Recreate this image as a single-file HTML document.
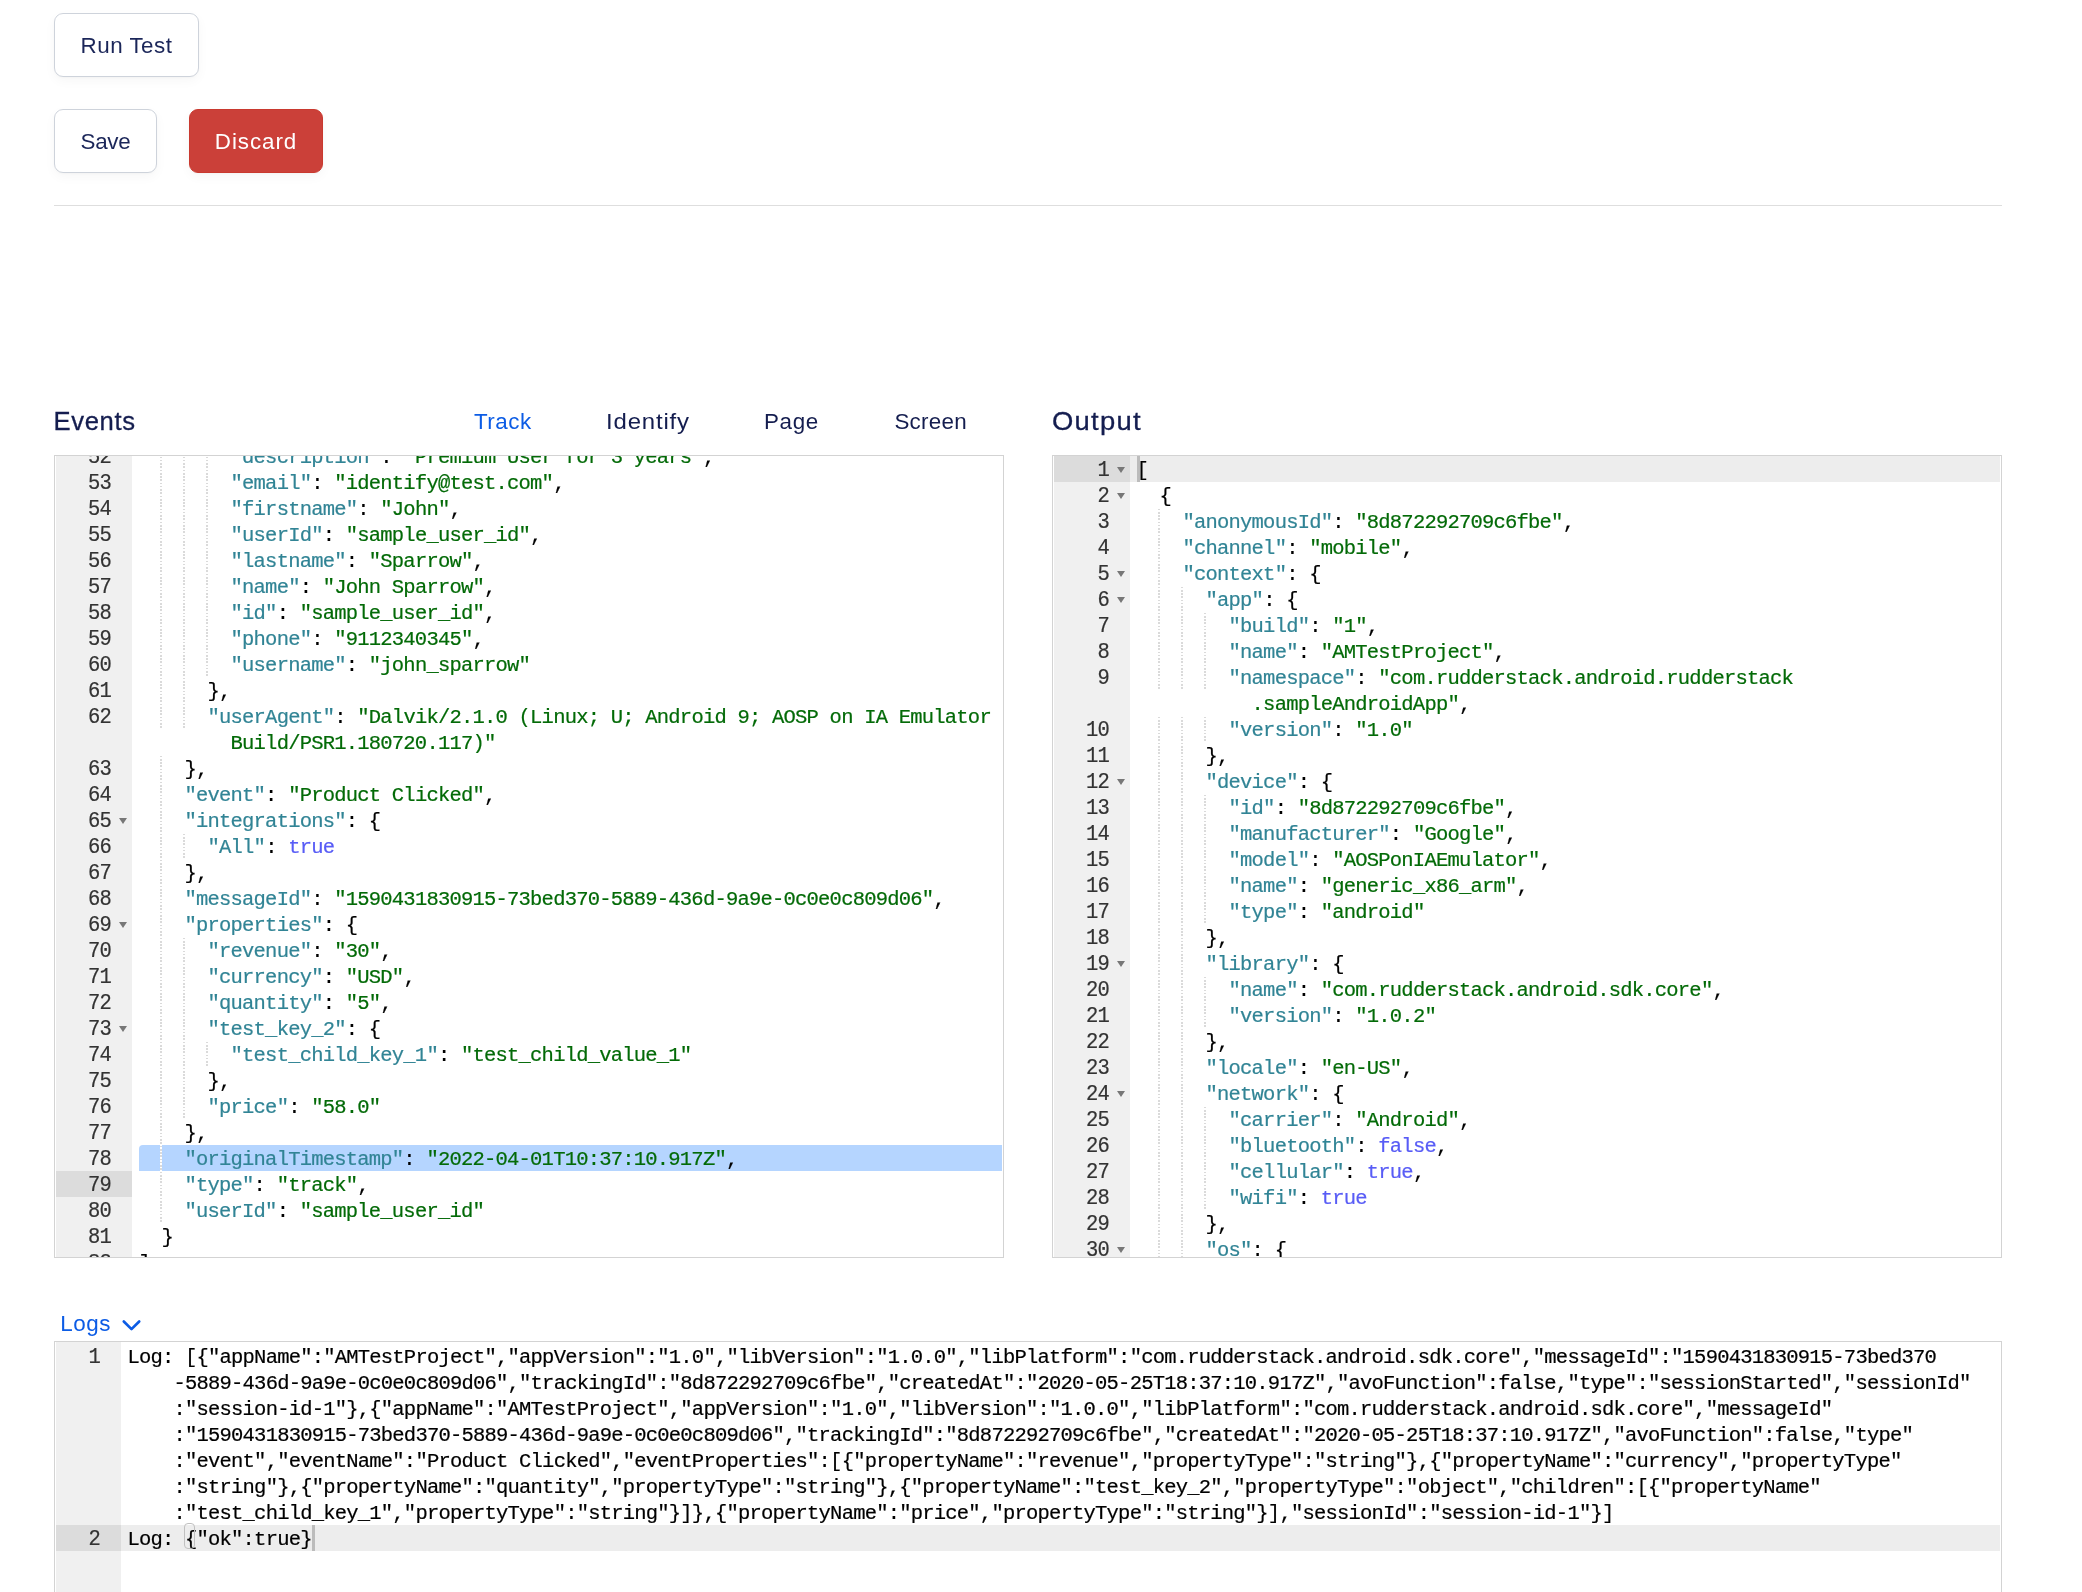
<!DOCTYPE html>
<html><head><meta charset="utf-8"><title>Transformation</title>
<style>
html,body{margin:0;padding:0}
body{width:2082px;height:1592px;overflow:hidden;background:#fff;position:relative;will-change:transform;font-family:"Liberation Sans",sans-serif;color:#141d4f}
.btn{position:absolute;box-sizing:border-box;height:64px;border:1px solid #ced3db;border-radius:9px;background:#fff;font-size:22.4px;line-height:64px;text-align:center;color:#1b2659;box-shadow:0 4px 12px rgba(20,25,40,.035),0 1px 3px rgba(20,25,40,.03);white-space:nowrap}
.btn.red{background:#cb4039;border-color:#c9392f;color:#fff}
.hr{position:absolute;left:54px;top:205px;width:1948px;height:1px;background:#dedede}
.h{position:absolute;font-size:25.6px;line-height:32px;white-space:nowrap;color:#141d4f;-webkit-text-stroke:.3px #141d4f;transform-origin:0 0}
.tab{position:absolute;transform-origin:0 0;font-size:22.4px;line-height:30px;white-space:nowrap;color:#141d4f}
.ed{position:absolute;box-sizing:border-box;border:1px solid #d3d3d3;background:#fff;overflow:hidden;font-family:"Liberation Mono",monospace;font-size:20.5px;letter-spacing:-0.7820px;line-height:26px;color:#000;-webkit-text-stroke:.2px}
.ed>*{position:absolute}
.gut{top:0;bottom:0;background:#f0f0f0}
.ga{background:#dcdcdc}
.la{background:#ededed}
.sel{background:#b5d5ff;border-radius:4px 0 0 0}
.gn{height:26px;text-align:right;color:#333;white-space:pre;padding-top:2px;transform:scaleY(1.1);transform-origin:0 20px}
.tx{height:26px;white-space:pre;padding-top:2px}
.k{color:#318495}.s{color:#036a07}.b{color:#585cf6}
.fa{width:0;height:0;border-left:4.2px solid transparent;border-right:4.2px solid transparent;border-top:6px solid #777}
.ig{width:2px;height:26px;background:repeating-linear-gradient(to bottom,#fff 0,#fff .8px,#dadada .8px,#dadada 2.4px,#fff 2.4px,#fff 3.2px)}
.cur{width:3px;height:26px;background:#bcbcbc}
.br{box-sizing:border-box;width:11px;height:26px;border:1px solid #c0c0c0;border-radius:4px}
</style></head><body>
<div class="btn" style="left:54px;top:13px;width:145px;letter-spacing:.49px">Run Test</div>
<div class="btn" style="left:54px;top:109px;width:103px;letter-spacing:-.3px">Save</div>
<div class="btn red" style="left:189px;top:109px;width:134px;letter-spacing:.93px">Discard</div>
<div class="hr"></div>
<div class="h" id="hEvents" style="left:53.5px;top:405px;letter-spacing:.64px">Events</div>
<div class="tab" id="tTrack" style="left:474px;top:407px;letter-spacing:.5px;color:#0c5ce5">Track</div>
<div class="tab" id="tIdentify" style="left:606.2px;top:407px;letter-spacing:.77px;transform:scaleX(1.07)">Identify</div>
<div class="tab" id="tPage" style="left:764px;top:407px;letter-spacing:.63px">Page</div>
<div class="tab" id="tScreen" style="left:894.4px;top:407px;letter-spacing:.26px">Screen</div>
<div class="h" id="hOutput" style="left:1052px;top:405px;letter-spacing:1.2px;transform:scaleX(1.07)">Output</div>
<div class="ed" style="left:54px;top:455px;width:950px;height:803px">
<div class="gut" style="left:1px;width:76px"></div>
<div class="gn" style="left:1px;top:-13px;width:55px">52</div>
<i class="ig" style="left:105.2px;top:-13px"></i>
<i class="ig" style="left:128.3px;top:-13px"></i>
<i class="ig" style="left:151.3px;top:-13px"></i>
<div class="tx" style="left:175.56px;top:-13px"><span class="k">"description"</span>: <span class="s">"Premium User for 3 years"</span>,</div>
<div class="gn" style="left:1px;top:13px;width:55px">53</div>
<i class="ig" style="left:105.2px;top:13px"></i>
<i class="ig" style="left:128.3px;top:13px"></i>
<i class="ig" style="left:151.3px;top:13px"></i>
<div class="tx" style="left:175.56px;top:13px"><span class="k">"email"</span>: <span class="s">"identify@test.com"</span>,</div>
<div class="gn" style="left:1px;top:39px;width:55px">54</div>
<i class="ig" style="left:105.2px;top:39px"></i>
<i class="ig" style="left:128.3px;top:39px"></i>
<i class="ig" style="left:151.3px;top:39px"></i>
<div class="tx" style="left:175.56px;top:39px"><span class="k">"firstname"</span>: <span class="s">"John"</span>,</div>
<div class="gn" style="left:1px;top:65px;width:55px">55</div>
<i class="ig" style="left:105.2px;top:65px"></i>
<i class="ig" style="left:128.3px;top:65px"></i>
<i class="ig" style="left:151.3px;top:65px"></i>
<div class="tx" style="left:175.56px;top:65px"><span class="k">"userId"</span>: <span class="s">"sample_user_id"</span>,</div>
<div class="gn" style="left:1px;top:91px;width:55px">56</div>
<i class="ig" style="left:105.2px;top:91px"></i>
<i class="ig" style="left:128.3px;top:91px"></i>
<i class="ig" style="left:151.3px;top:91px"></i>
<div class="tx" style="left:175.56px;top:91px"><span class="k">"lastname"</span>: <span class="s">"Sparrow"</span>,</div>
<div class="gn" style="left:1px;top:117px;width:55px">57</div>
<i class="ig" style="left:105.2px;top:117px"></i>
<i class="ig" style="left:128.3px;top:117px"></i>
<i class="ig" style="left:151.3px;top:117px"></i>
<div class="tx" style="left:175.56px;top:117px"><span class="k">"name"</span>: <span class="s">"John Sparrow"</span>,</div>
<div class="gn" style="left:1px;top:143px;width:55px">58</div>
<i class="ig" style="left:105.2px;top:143px"></i>
<i class="ig" style="left:128.3px;top:143px"></i>
<i class="ig" style="left:151.3px;top:143px"></i>
<div class="tx" style="left:175.56px;top:143px"><span class="k">"id"</span>: <span class="s">"sample_user_id"</span>,</div>
<div class="gn" style="left:1px;top:169px;width:55px">59</div>
<i class="ig" style="left:105.2px;top:169px"></i>
<i class="ig" style="left:128.3px;top:169px"></i>
<i class="ig" style="left:151.3px;top:169px"></i>
<div class="tx" style="left:175.56px;top:169px"><span class="k">"phone"</span>: <span class="s">"9112340345"</span>,</div>
<div class="gn" style="left:1px;top:195px;width:55px">60</div>
<i class="ig" style="left:105.2px;top:195px"></i>
<i class="ig" style="left:128.3px;top:195px"></i>
<i class="ig" style="left:151.3px;top:195px"></i>
<div class="tx" style="left:175.56px;top:195px"><span class="k">"username"</span>: <span class="s">"john_sparrow"</span></div>
<div class="gn" style="left:1px;top:221px;width:55px">61</div>
<i class="ig" style="left:105.2px;top:221px"></i>
<i class="ig" style="left:128.3px;top:221px"></i>
<div class="tx" style="left:152.52px;top:221px">},</div>
<div class="gn" style="left:1px;top:247px;width:55px">62</div>
<i class="ig" style="left:105.2px;top:247px"></i>
<i class="ig" style="left:128.3px;top:247px"></i>
<div class="tx" style="left:152.52px;top:247px"><span class="k">"userAgent"</span>: <span class="s">"Dalvik/2.1.0 (Linux; U; Android 9; AOSP on IA Emulator</span></div>
<div class="tx" style="left:175.56px;top:273px"><span class="s">Build/PSR1.180720.117)"</span></div>
<div class="gn" style="left:1px;top:299px;width:55px">63</div>
<i class="ig" style="left:105.2px;top:299px"></i>
<div class="tx" style="left:129.48px;top:299px">},</div>
<div class="gn" style="left:1px;top:325px;width:55px">64</div>
<i class="ig" style="left:105.2px;top:325px"></i>
<div class="tx" style="left:129.48px;top:325px"><span class="k">"event"</span>: <span class="s">"Product Clicked"</span>,</div>
<div class="gn" style="left:1px;top:351px;width:55px">65</div>
<i class="fa" style="left:64.0px;top:362px"></i>
<i class="ig" style="left:105.2px;top:351px"></i>
<div class="tx" style="left:129.48px;top:351px"><span class="k">"integrations"</span>: {</div>
<div class="gn" style="left:1px;top:377px;width:55px">66</div>
<i class="ig" style="left:105.2px;top:377px"></i>
<i class="ig" style="left:128.3px;top:377px"></i>
<div class="tx" style="left:152.52px;top:377px"><span class="k">"All"</span>: <span class="b">true</span></div>
<div class="gn" style="left:1px;top:403px;width:55px">67</div>
<i class="ig" style="left:105.2px;top:403px"></i>
<div class="tx" style="left:129.48px;top:403px">},</div>
<div class="gn" style="left:1px;top:429px;width:55px">68</div>
<i class="ig" style="left:105.2px;top:429px"></i>
<div class="tx" style="left:129.48px;top:429px"><span class="k">"messageId"</span>: <span class="s">"1590431830915-73bed370-5889-436d-9a9e-0c0e0c809d06"</span>,</div>
<div class="gn" style="left:1px;top:455px;width:55px">69</div>
<i class="fa" style="left:64.0px;top:466px"></i>
<i class="ig" style="left:105.2px;top:455px"></i>
<div class="tx" style="left:129.48px;top:455px"><span class="k">"properties"</span>: {</div>
<div class="gn" style="left:1px;top:481px;width:55px">70</div>
<i class="ig" style="left:105.2px;top:481px"></i>
<i class="ig" style="left:128.3px;top:481px"></i>
<div class="tx" style="left:152.52px;top:481px"><span class="k">"revenue"</span>: <span class="s">"30"</span>,</div>
<div class="gn" style="left:1px;top:507px;width:55px">71</div>
<i class="ig" style="left:105.2px;top:507px"></i>
<i class="ig" style="left:128.3px;top:507px"></i>
<div class="tx" style="left:152.52px;top:507px"><span class="k">"currency"</span>: <span class="s">"USD"</span>,</div>
<div class="gn" style="left:1px;top:533px;width:55px">72</div>
<i class="ig" style="left:105.2px;top:533px"></i>
<i class="ig" style="left:128.3px;top:533px"></i>
<div class="tx" style="left:152.52px;top:533px"><span class="k">"quantity"</span>: <span class="s">"5"</span>,</div>
<div class="gn" style="left:1px;top:559px;width:55px">73</div>
<i class="fa" style="left:64.0px;top:570px"></i>
<i class="ig" style="left:105.2px;top:559px"></i>
<i class="ig" style="left:128.3px;top:559px"></i>
<div class="tx" style="left:152.52px;top:559px"><span class="k">"test_key_2"</span>: {</div>
<div class="gn" style="left:1px;top:585px;width:55px">74</div>
<i class="ig" style="left:105.2px;top:585px"></i>
<i class="ig" style="left:128.3px;top:585px"></i>
<i class="ig" style="left:151.3px;top:585px"></i>
<div class="tx" style="left:175.56px;top:585px"><span class="k">"test_child_key_1"</span>: <span class="s">"test_child_value_1"</span></div>
<div class="gn" style="left:1px;top:611px;width:55px">75</div>
<i class="ig" style="left:105.2px;top:611px"></i>
<i class="ig" style="left:128.3px;top:611px"></i>
<div class="tx" style="left:152.52px;top:611px">},</div>
<div class="gn" style="left:1px;top:637px;width:55px">76</div>
<i class="ig" style="left:105.2px;top:637px"></i>
<i class="ig" style="left:128.3px;top:637px"></i>
<div class="tx" style="left:152.52px;top:637px"><span class="k">"price"</span>: <span class="s">"58.0"</span></div>
<div class="gn" style="left:1px;top:663px;width:55px">77</div>
<i class="ig" style="left:105.2px;top:663px"></i>
<div class="tx" style="left:129.48px;top:663px">},</div>
<div class="sel" style="left:84.4px;top:689px;width:862.6px;height:26px"></div>
<div class="gn" style="left:1px;top:689px;width:55px">78</div>
<i class="ig" style="left:105.2px;top:689px"></i>
<div class="tx" style="left:129.48px;top:689px"><span class="k">"originalTimestamp"</span>: <span class="s">"2022-04-01T10:37:10.917Z"</span>,</div>
<div class="ga" style="left:1px;top:715px;width:76px;height:26px"></div>
<div class="gn" style="left:1px;top:715px;width:55px">79</div>
<i class="ig" style="left:105.2px;top:715px"></i>
<div class="tx" style="left:129.48px;top:715px"><span class="k">"type"</span>: <span class="s">"track"</span>,</div>
<div class="gn" style="left:1px;top:741px;width:55px">80</div>
<i class="ig" style="left:105.2px;top:741px"></i>
<div class="tx" style="left:129.48px;top:741px"><span class="k">"userId"</span>: <span class="s">"sample_user_id"</span></div>
<div class="gn" style="left:1px;top:767px;width:55px">81</div>
<div class="tx" style="left:106.44px;top:767px">}</div>
<div class="gn" style="left:1px;top:793px;width:55px">82</div>
<div class="tx" style="left:83.40px;top:793px">]</div>
</div>
<div class="ed" style="left:1052px;top:455px;width:950px;height:803px">
<div class="gut" style="left:1px;width:76px"></div>
<div class="ga" style="left:1px;top:0px;width:76px;height:26px"></div>
<div class="la" style="left:77px;top:0px;width:870px;height:26px"></div>
<div class="gn" style="left:1px;top:0px;width:55px">1</div>
<i class="fa" style="left:64.0px;top:11px"></i>
<div class="tx" style="left:83.40px;top:0px">[</div>
<div class="cur" style="left:calc(83.4px + 1px);top:0px"></div>
<div class="gn" style="left:1px;top:26px;width:55px">2</div>
<i class="fa" style="left:64.0px;top:37px"></i>
<div class="tx" style="left:106.44px;top:26px">{</div>
<div class="gn" style="left:1px;top:52px;width:55px">3</div>
<i class="ig" style="left:105.2px;top:52px"></i>
<div class="tx" style="left:129.48px;top:52px"><span class="k">"anonymousId"</span>: <span class="s">"8d872292709c6fbe"</span>,</div>
<div class="gn" style="left:1px;top:78px;width:55px">4</div>
<i class="ig" style="left:105.2px;top:78px"></i>
<div class="tx" style="left:129.48px;top:78px"><span class="k">"channel"</span>: <span class="s">"mobile"</span>,</div>
<div class="gn" style="left:1px;top:104px;width:55px">5</div>
<i class="fa" style="left:64.0px;top:115px"></i>
<i class="ig" style="left:105.2px;top:104px"></i>
<div class="tx" style="left:129.48px;top:104px"><span class="k">"context"</span>: {</div>
<div class="gn" style="left:1px;top:130px;width:55px">6</div>
<i class="fa" style="left:64.0px;top:141px"></i>
<i class="ig" style="left:105.2px;top:130px"></i>
<i class="ig" style="left:128.3px;top:130px"></i>
<div class="tx" style="left:152.52px;top:130px"><span class="k">"app"</span>: {</div>
<div class="gn" style="left:1px;top:156px;width:55px">7</div>
<i class="ig" style="left:105.2px;top:156px"></i>
<i class="ig" style="left:128.3px;top:156px"></i>
<i class="ig" style="left:151.3px;top:156px"></i>
<div class="tx" style="left:175.56px;top:156px"><span class="k">"build"</span>: <span class="s">"1"</span>,</div>
<div class="gn" style="left:1px;top:182px;width:55px">8</div>
<i class="ig" style="left:105.2px;top:182px"></i>
<i class="ig" style="left:128.3px;top:182px"></i>
<i class="ig" style="left:151.3px;top:182px"></i>
<div class="tx" style="left:175.56px;top:182px"><span class="k">"name"</span>: <span class="s">"AMTestProject"</span>,</div>
<div class="gn" style="left:1px;top:208px;width:55px">9</div>
<i class="ig" style="left:105.2px;top:208px"></i>
<i class="ig" style="left:128.3px;top:208px"></i>
<i class="ig" style="left:151.3px;top:208px"></i>
<div class="tx" style="left:175.56px;top:208px"><span class="k">"namespace"</span>: <span class="s">"com.rudderstack.android.rudderstack</span></div>
<div class="tx" style="left:198.60px;top:234px"><span class="s">.sampleAndroidApp"</span>,</div>
<div class="gn" style="left:1px;top:260px;width:55px">10</div>
<i class="ig" style="left:105.2px;top:260px"></i>
<i class="ig" style="left:128.3px;top:260px"></i>
<i class="ig" style="left:151.3px;top:260px"></i>
<div class="tx" style="left:175.56px;top:260px"><span class="k">"version"</span>: <span class="s">"1.0"</span></div>
<div class="gn" style="left:1px;top:286px;width:55px">11</div>
<i class="ig" style="left:105.2px;top:286px"></i>
<i class="ig" style="left:128.3px;top:286px"></i>
<div class="tx" style="left:152.52px;top:286px">},</div>
<div class="gn" style="left:1px;top:312px;width:55px">12</div>
<i class="fa" style="left:64.0px;top:323px"></i>
<i class="ig" style="left:105.2px;top:312px"></i>
<i class="ig" style="left:128.3px;top:312px"></i>
<div class="tx" style="left:152.52px;top:312px"><span class="k">"device"</span>: {</div>
<div class="gn" style="left:1px;top:338px;width:55px">13</div>
<i class="ig" style="left:105.2px;top:338px"></i>
<i class="ig" style="left:128.3px;top:338px"></i>
<i class="ig" style="left:151.3px;top:338px"></i>
<div class="tx" style="left:175.56px;top:338px"><span class="k">"id"</span>: <span class="s">"8d872292709c6fbe"</span>,</div>
<div class="gn" style="left:1px;top:364px;width:55px">14</div>
<i class="ig" style="left:105.2px;top:364px"></i>
<i class="ig" style="left:128.3px;top:364px"></i>
<i class="ig" style="left:151.3px;top:364px"></i>
<div class="tx" style="left:175.56px;top:364px"><span class="k">"manufacturer"</span>: <span class="s">"Google"</span>,</div>
<div class="gn" style="left:1px;top:390px;width:55px">15</div>
<i class="ig" style="left:105.2px;top:390px"></i>
<i class="ig" style="left:128.3px;top:390px"></i>
<i class="ig" style="left:151.3px;top:390px"></i>
<div class="tx" style="left:175.56px;top:390px"><span class="k">"model"</span>: <span class="s">"AOSPonIAEmulator"</span>,</div>
<div class="gn" style="left:1px;top:416px;width:55px">16</div>
<i class="ig" style="left:105.2px;top:416px"></i>
<i class="ig" style="left:128.3px;top:416px"></i>
<i class="ig" style="left:151.3px;top:416px"></i>
<div class="tx" style="left:175.56px;top:416px"><span class="k">"name"</span>: <span class="s">"generic_x86_arm"</span>,</div>
<div class="gn" style="left:1px;top:442px;width:55px">17</div>
<i class="ig" style="left:105.2px;top:442px"></i>
<i class="ig" style="left:128.3px;top:442px"></i>
<i class="ig" style="left:151.3px;top:442px"></i>
<div class="tx" style="left:175.56px;top:442px"><span class="k">"type"</span>: <span class="s">"android"</span></div>
<div class="gn" style="left:1px;top:468px;width:55px">18</div>
<i class="ig" style="left:105.2px;top:468px"></i>
<i class="ig" style="left:128.3px;top:468px"></i>
<div class="tx" style="left:152.52px;top:468px">},</div>
<div class="gn" style="left:1px;top:494px;width:55px">19</div>
<i class="fa" style="left:64.0px;top:505px"></i>
<i class="ig" style="left:105.2px;top:494px"></i>
<i class="ig" style="left:128.3px;top:494px"></i>
<div class="tx" style="left:152.52px;top:494px"><span class="k">"library"</span>: {</div>
<div class="gn" style="left:1px;top:520px;width:55px">20</div>
<i class="ig" style="left:105.2px;top:520px"></i>
<i class="ig" style="left:128.3px;top:520px"></i>
<i class="ig" style="left:151.3px;top:520px"></i>
<div class="tx" style="left:175.56px;top:520px"><span class="k">"name"</span>: <span class="s">"com.rudderstack.android.sdk.core"</span>,</div>
<div class="gn" style="left:1px;top:546px;width:55px">21</div>
<i class="ig" style="left:105.2px;top:546px"></i>
<i class="ig" style="left:128.3px;top:546px"></i>
<i class="ig" style="left:151.3px;top:546px"></i>
<div class="tx" style="left:175.56px;top:546px"><span class="k">"version"</span>: <span class="s">"1.0.2"</span></div>
<div class="gn" style="left:1px;top:572px;width:55px">22</div>
<i class="ig" style="left:105.2px;top:572px"></i>
<i class="ig" style="left:128.3px;top:572px"></i>
<div class="tx" style="left:152.52px;top:572px">},</div>
<div class="gn" style="left:1px;top:598px;width:55px">23</div>
<i class="ig" style="left:105.2px;top:598px"></i>
<i class="ig" style="left:128.3px;top:598px"></i>
<div class="tx" style="left:152.52px;top:598px"><span class="k">"locale"</span>: <span class="s">"en-US"</span>,</div>
<div class="gn" style="left:1px;top:624px;width:55px">24</div>
<i class="fa" style="left:64.0px;top:635px"></i>
<i class="ig" style="left:105.2px;top:624px"></i>
<i class="ig" style="left:128.3px;top:624px"></i>
<div class="tx" style="left:152.52px;top:624px"><span class="k">"network"</span>: {</div>
<div class="gn" style="left:1px;top:650px;width:55px">25</div>
<i class="ig" style="left:105.2px;top:650px"></i>
<i class="ig" style="left:128.3px;top:650px"></i>
<i class="ig" style="left:151.3px;top:650px"></i>
<div class="tx" style="left:175.56px;top:650px"><span class="k">"carrier"</span>: <span class="s">"Android"</span>,</div>
<div class="gn" style="left:1px;top:676px;width:55px">26</div>
<i class="ig" style="left:105.2px;top:676px"></i>
<i class="ig" style="left:128.3px;top:676px"></i>
<i class="ig" style="left:151.3px;top:676px"></i>
<div class="tx" style="left:175.56px;top:676px"><span class="k">"bluetooth"</span>: <span class="b">false</span>,</div>
<div class="gn" style="left:1px;top:702px;width:55px">27</div>
<i class="ig" style="left:105.2px;top:702px"></i>
<i class="ig" style="left:128.3px;top:702px"></i>
<i class="ig" style="left:151.3px;top:702px"></i>
<div class="tx" style="left:175.56px;top:702px"><span class="k">"cellular"</span>: <span class="b">true</span>,</div>
<div class="gn" style="left:1px;top:728px;width:55px">28</div>
<i class="ig" style="left:105.2px;top:728px"></i>
<i class="ig" style="left:128.3px;top:728px"></i>
<i class="ig" style="left:151.3px;top:728px"></i>
<div class="tx" style="left:175.56px;top:728px"><span class="k">"wifi"</span>: <span class="b">true</span></div>
<div class="gn" style="left:1px;top:754px;width:55px">29</div>
<i class="ig" style="left:105.2px;top:754px"></i>
<i class="ig" style="left:128.3px;top:754px"></i>
<div class="tx" style="left:152.52px;top:754px">},</div>
<div class="gn" style="left:1px;top:780px;width:55px">30</div>
<i class="fa" style="left:64.0px;top:791px"></i>
<i class="ig" style="left:105.2px;top:780px"></i>
<i class="ig" style="left:128.3px;top:780px"></i>
<div class="tx" style="left:152.52px;top:780px"><span class="k">"os"</span>: {</div>
</div>
<div class="tab" id="tLogs" style="left:60.2px;top:1309px;letter-spacing:.6px;color:#0c5ce5">Logs</div>
<svg style="position:absolute;left:120px;top:1317px" width="24" height="16" viewBox="0 0 24 16"><path d="M3.8 4.5 L11.5 12.1 L19.2 4.5" fill="none" stroke="#0c5ce5" stroke-width="2.7" stroke-linecap="round" stroke-linejoin="round"/></svg>
<div class="ed" style="left:54px;top:1341px;width:1948px;height:300px">
<div class="gut" style="left:1px;width:65px"></div>
<div class="gn" style="left:1px;top:1px;width:44px">1</div>
<div class="tx" style="left:72.40px;top:1px">Log: [{"appName":"AMTestProject","appVersion":"1.0","libVersion":"1.0.0","libPlatform":"com.rudderstack.android.sdk.core","messageId":"1590431830915-73bed370</div>
<div class="tx" style="left:118.48px;top:27px">-5889-436d-9a9e-0c0e0c809d06","trackingId":"8d872292709c6fbe","createdAt":"2020-05-25T18:37:10.917Z","avoFunction":false,"type":"sessionStarted","sessionId"</div>
<div class="tx" style="left:118.48px;top:53px">:"session-id-1"},{"appName":"AMTestProject","appVersion":"1.0","libVersion":"1.0.0","libPlatform":"com.rudderstack.android.sdk.core","messageId"</div>
<div class="tx" style="left:118.48px;top:79px">:"1590431830915-73bed370-5889-436d-9a9e-0c0e0c809d06","trackingId":"8d872292709c6fbe","createdAt":"2020-05-25T18:37:10.917Z","avoFunction":false,"type"</div>
<div class="tx" style="left:118.48px;top:105px">:"event","eventName":"Product Clicked","eventProperties":[{"propertyName":"revenue","propertyType":"string"},{"propertyName":"currency","propertyType"</div>
<div class="tx" style="left:118.48px;top:131px">:"string"},{"propertyName":"quantity","propertyType":"string"},{"propertyName":"test_key_2","propertyType":"object","children":[{"propertyName"</div>
<div class="tx" style="left:118.48px;top:157px">:"test_child_key_1","propertyType":"string"}]},{"propertyName":"price","propertyType":"string"}],"sessionId":"session-id-1"}]</div>
<div class="ga" style="left:1px;top:183px;width:65px;height:26px"></div>
<div class="la" style="left:66px;top:183px;width:1879px;height:26px"></div>
<div class="gn" style="left:1px;top:183px;width:44px">2</div>
<div class="tx" style="left:72.40px;top:183px">Log: {"ok":true}</div>
<div class="br" style="left:calc(72.4px + 57.0px);top:calc(183px - 2px)"></div>
<div class="cur" style="left:calc(72.4px + 184.3px);top:183px"></div>
</div>
</body></html>
